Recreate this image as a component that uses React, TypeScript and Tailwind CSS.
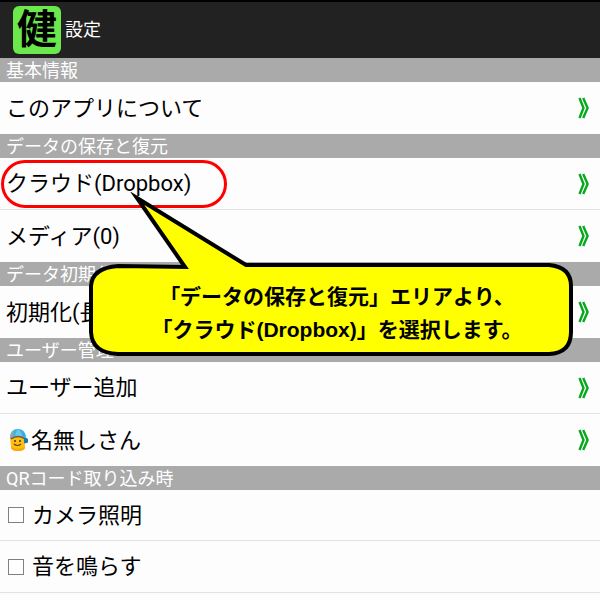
import type { ReactNode } from "react";

function Chevron() {
  return (
    <svg width="12" height="22" viewBox="0 0 12 22" fill="none" stroke="#06a81c" strokeWidth="2.400" className="shrink-0" aria-hidden="true">
      <path d="M1.500 1 L5.500 11 L1.500 21" />
      <path d="M5.200 1 L9.600 11 L5.200 21" />
    </svg>
  );
}

function Section({ title, children }: { title: string; children: ReactNode }) {
  return (
    <section>
      <h2 className="h-6 bg-[#aaaaaa] pl-1.5 text-lg leading-[26px] text-white">{title}</h2>
      <ul className="divide-y divide-[#e2e2e2]">{children}</ul>
    </section>
  );
}

function LinkRow({ label, icon, marked }: { label: string; icon?: ReactNode; marked?: boolean }) {
  return (
    <li className="relative h-[52px]">
      <a href="#" className="flex h-full items-center justify-between pl-1.5 pr-2.5 text-[22px] text-black">
        <span className="flex items-center gap-[3px] whitespace-nowrap">{icon}{label}</span>
        <Chevron />
      </a>
      {marked && <span className="pointer-events-none absolute left-px top-0.5 h-12 w-[226px] rounded-3xl border-[3px] border-[#ff0000]" />}
    </li>
  );
}

function CheckRow({ label }: { label: string }) {
  return (
    <li className="h-[51px]">
      <label className="flex h-full items-center gap-2 pl-2 text-[22px] text-black">
        <input type="checkbox" className="size-4 shrink-0 appearance-none border border-[#808080] bg-white checked:bg-[#06a81c]" />
        {label}
      </label>
    </li>
  );
}

function Avatar() {
  return (
    <svg width="22" height="24" viewBox="0 0 22 24" className="shrink-0" aria-hidden="true">
      <path d="M4 9 H19 V19 Q19 23 12 23 Q5 23 5 19 Z" fill="#fdbf10" />
      <path d="M5 19 Q5 23 12 23 Q19 23 19 19 Q12 22.500 5 19" fill="#fba70c" />
      <path d="M4 10 Q4 1 12 1 Q19 1 20 9 L19 11 Q12 7 5 11 Z" fill="#35b1df" />
      <path d="M4 10 Q4 4 9 2 Q7 5 7.500 9 Z" fill="#8eaab5" />
      <path d="M9 8 Q9 4 12 1 Q16 4 16 8 Z" fill="#65c8ed" />
      <path d="M5 11 Q12 6 19 11" fill="none" stroke="#8a5520" strokeWidth="1.500" />
      <path d="M18 10 Q23 9 22 14 Q21 16 18 15 Z" fill="#1477ae" />
      <circle cx="9" cy="13" r="1" fill="#4b3514" />
      <circle cx="14" cy="13" r="1" fill="#4b3514" />
      <path d="M8 16 Q11.500 19 15 16" fill="none" stroke="#65430b" strokeWidth="1.200" />
    </svg>
  );
}

function Callout() {
  return (
    <div className="pointer-events-none absolute left-[88px] top-[192px] h-[166px] w-[486px]">
      <svg viewBox="0 0 486 166" className="absolute inset-0 size-full" aria-hidden="true">
        <path
          d="M49 6 L158 73 H461 Q483 75 483 94 V140 Q483 161 461 162 H30 Q4 161 3 140 V94 Q4 76 30 74 L97 75 Z"
          fill="#ffff00" stroke="#000" strokeWidth="4" strokeMiterlimit="8"
        />
      </svg>
      <p className="relative whitespace-nowrap pl-3 pt-[88px] text-center font-['Liberation_Sans','Noto_Sans_CJK_JP',sans-serif] text-[21px] font-bold leading-[33px] text-black">
        「データの保存と復元」エリアより、<br />
        「クラウド(Dropbox)」を選択します。
      </p>
    </div>
  );
}

export default function App() {
  return (
    <main className="relative min-h-screen overflow-hidden bg-[#fdfdfd] font-['Roboto','Noto_Sans_CJK_JP',sans-serif]">
      <header className="flex h-[58px] items-center gap-1 border-t-2 border-black bg-[#222222] pl-[13px]">
        <span className="flex size-12 items-center justify-center rounded-md bg-[#6be84b] text-[40px] font-bold leading-none text-black" aria-hidden="true">健</span>
        <h1 className="text-lg leading-7 text-white">設定</h1>
      </header>

      <Section title="基本情報">
        <LinkRow label="このアプリについて" />
      </Section>
      <Section title="データの保存と復元">
        <LinkRow label="クラウド(Dropbox)" marked />
        <LinkRow label="メディア(0)" />
      </Section>
      <Section title="データ初期化">
        <LinkRow label="初期化(長押し)" />
      </Section>
      <Section title="ユーザー管理">
        <LinkRow label="ユーザー追加" />
        <LinkRow label="名無しさん" icon={<Avatar />} />
      </Section>
      <Section title="QRコード取り込み時">
        <CheckRow label="カメラ照明" />
        <CheckRow label="音を鳴らす" />
      </Section>
      <div className="border-t border-[#e2e2e2]" />

      <Callout />
    </main>
  );
}
